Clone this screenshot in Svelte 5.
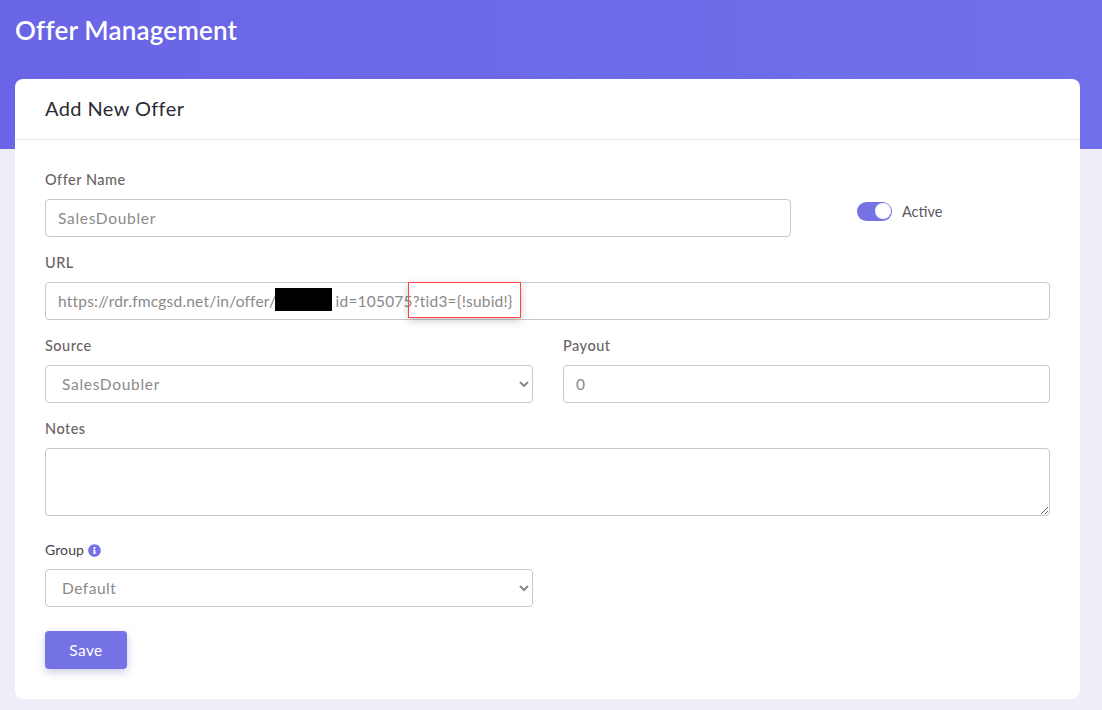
<script>
	let offerName = $state('SalesDoubler');
	let url = $state('https://rdr.fmcgsd.net/in/offer/000000 id=105075?tid3={!subid!}');
	let source = $state('SalesDoubler');
	let payout = $state('0');
	let notes = $state('');
	let group = $state('Default');
	let active = $state(true);
</script>

<div class="hero">
	<h1>Offer Management</h1>
</div>

<div class="page">
	<div class="card">
		<div class="card-header">
			<h2>Add New Offer</h2>
		</div>
		<form class="card-body" onsubmit={(e) => e.preventDefault()}>
			<div class="row-name">
				<div class="field">
					<label for="offer-name">Offer Name</label>
					<input id="offer-name" class="wide" bind:value={offerName} type="text" />
				</div>
				<label class="switch">
					<input bind:checked={active} type="checkbox" />
					<span class="track"></span>
					<span class="switch-text">Active</span>
				</label>
			</div>

			<div class="field url-field">
				<label for="url">URL</label>
				<input id="url" bind:value={url} type="text" spellcheck="false" />
				<span class="redact"></span>
				<span class="highlight"></span>
			</div>

			<div class="row-two">
				<div class="field">
					<label for="source">Source</label>
					<select id="source" class="wide" bind:value={source}>
						<option>SalesDoubler</option>
					</select>
				</div>
				<div class="field">
					<label for="payout">Payout</label>
					<input id="payout" bind:value={payout} type="text" />
				</div>
			</div>

			<div class="field notes">
				<label for="notes">Notes</label>
				<textarea id="notes" bind:value={notes}></textarea>
			</div>

			<div class="field group">
				<label for="group" class="dark">
					Group
					<svg class="info" viewBox="0 0 512 512" aria-hidden="true">
						<path d="M256 8C119 8 8 119 8 256s111 248 248 248 248-111 248-248S393 8 256 8zm0 110c23 0 42 19 42 42s-19 42-42 42-42-19-42-42 19-42 42-42zm56 254c0 7-5 12-12 12h-88c-7 0-12-5-12-12v-24c0-7 5-12 12-12h12v-64h-12c-7 0-12-5-12-12v-24c0-7 5-12 12-12h64c7 0 12 5 12 12v100h12c7 0 12 5 12 12v24z" />
					</svg>
				</label>
				<select id="group" bind:value={group}>
					<option>Default</option>
				</select>
			</div>

			<button type="submit">Save</button>
		</form>
	</div>
</div>

<style>
	:global(body) {
		margin: 0;
		background: #eeedf8;
		font-family: Lato, "Open Sans", sans-serif;
		font-size: 14px;
		color: #6e6b7b;
	}

	.hero {
		height: 149px;
		box-sizing: border-box;
		padding: 15px 15px 0;
		background: linear-gradient(90deg, #6965e6, #716fe9);
	}

	h1 {
		margin: 0;
		font-size: 26px;
		font-weight: 600;
		line-height: 30px;
		letter-spacing: 0.18px;
		color: #fff;
	}

	.page {
		margin-top: -70px;
		padding: 0 22px 11px 15px;
	}

	.card {
		background: #fff;
		border-radius: 8px;
	}

	.card-header {
		height: 61px;
		box-sizing: border-box;
		padding: 0 30px 2px;
		display: flex;
		align-items: center;
		border-bottom: 1px solid #e8e8ec;
	}

	h2 {
		margin: 0;
		font-size: 20px;
		font-weight: 400;
		letter-spacing: 0.4px;
		color: #2c2c36;
	}

	.card-body {
		padding: 30px;
	}

	.row-name {
		display: grid;
		grid-template-columns: 746px 1fr;
		column-gap: 66px;
	}

	.row-two {
		display: grid;
		grid-template-columns: 488px 1fr;
		column-gap: 30px;
	}

	.field {
		margin-bottom: 16px;
		min-width: 0;
	}

	.field label {
		display: block;
		margin-bottom: 9px;
		line-height: 20px;
		font-size: 14.5px;
		font-weight: 500;
		letter-spacing: 0.5px;
		color: #6a6464;
	}

	.field label.dark {
		display: flex;
		align-items: center;
		gap: 4px;
		color: #45424c;
		font-size: 14px;
		font-weight: 400;
		letter-spacing: 0.1px;
	}

	input[type='text'],
	select,
	textarea {
		display: block;
		box-sizing: border-box;
		width: 100%;
		height: 38px;
		padding: 0 12px;
		font: inherit;
		font-size: 15.5px;
		letter-spacing: 0.2px;
		color: #8a8a8a;
		background-color: #fff;
		border: 1px solid #c8c8c8;
		border-radius: 4px;
		outline: none;
	}

	input.wide,
	select.wide {
		letter-spacing: 0.7px;
	}

	#group {
		letter-spacing: 0.5px;
	}

	textarea {
		height: 68px;
		padding: 8px 12px;
	}

	.url-field {
		position: relative;
	}

	/* redaction and the red marker sit on top of the url input */
	.redact {
		position: absolute;
		left: 230px;
		top: 35px;
		width: 57px;
		height: 23px;
		background: #000;
	}

	.highlight {
		position: absolute;
		left: 363px;
		top: 29px;
		width: 113px;
		height: 36px;
		box-sizing: border-box;
		border: 1px solid #f44;
		box-shadow: 0 3px 8px rgba(0, 0, 0, 0.2);
	}

	.switch {
		display: flex;
		align-items: center;
		gap: 10px;
		align-self: start;
		margin-top: 31px;
		height: 20px;
		font-size: 14.5px;
		color: #5b5864;
	}

	.switch input {
		display: none;
	}

	.track {
		position: relative;
		width: 35px;
		height: 19px;
		border-radius: 10px;
		background: #7572e6;
	}

	.track::after {
		content: '';
		position: absolute;
		top: 1.5px;
		right: 1px;
		width: 16px;
		height: 16px;
		border-radius: 50%;
		background: #fff;
	}

	.notes {
		margin-bottom: 24px;
	}

	.group {
		width: 488px;
		margin-bottom: 24px;
	}

	.info {
		width: 13px;
		height: 13px;
		fill: #7572e6;
	}

	button {
		display: block;
		width: 82px;
		height: 38px;
		padding: 0;
		border: none;
		border-radius: 4px;
		background: #7572e6;
		color: #fff;
		font: inherit;
		font-size: 15.5px;
		letter-spacing: 0.4px;
		box-shadow: 0 3px 8px rgba(80, 78, 180, 0.3);
	}
</style>
